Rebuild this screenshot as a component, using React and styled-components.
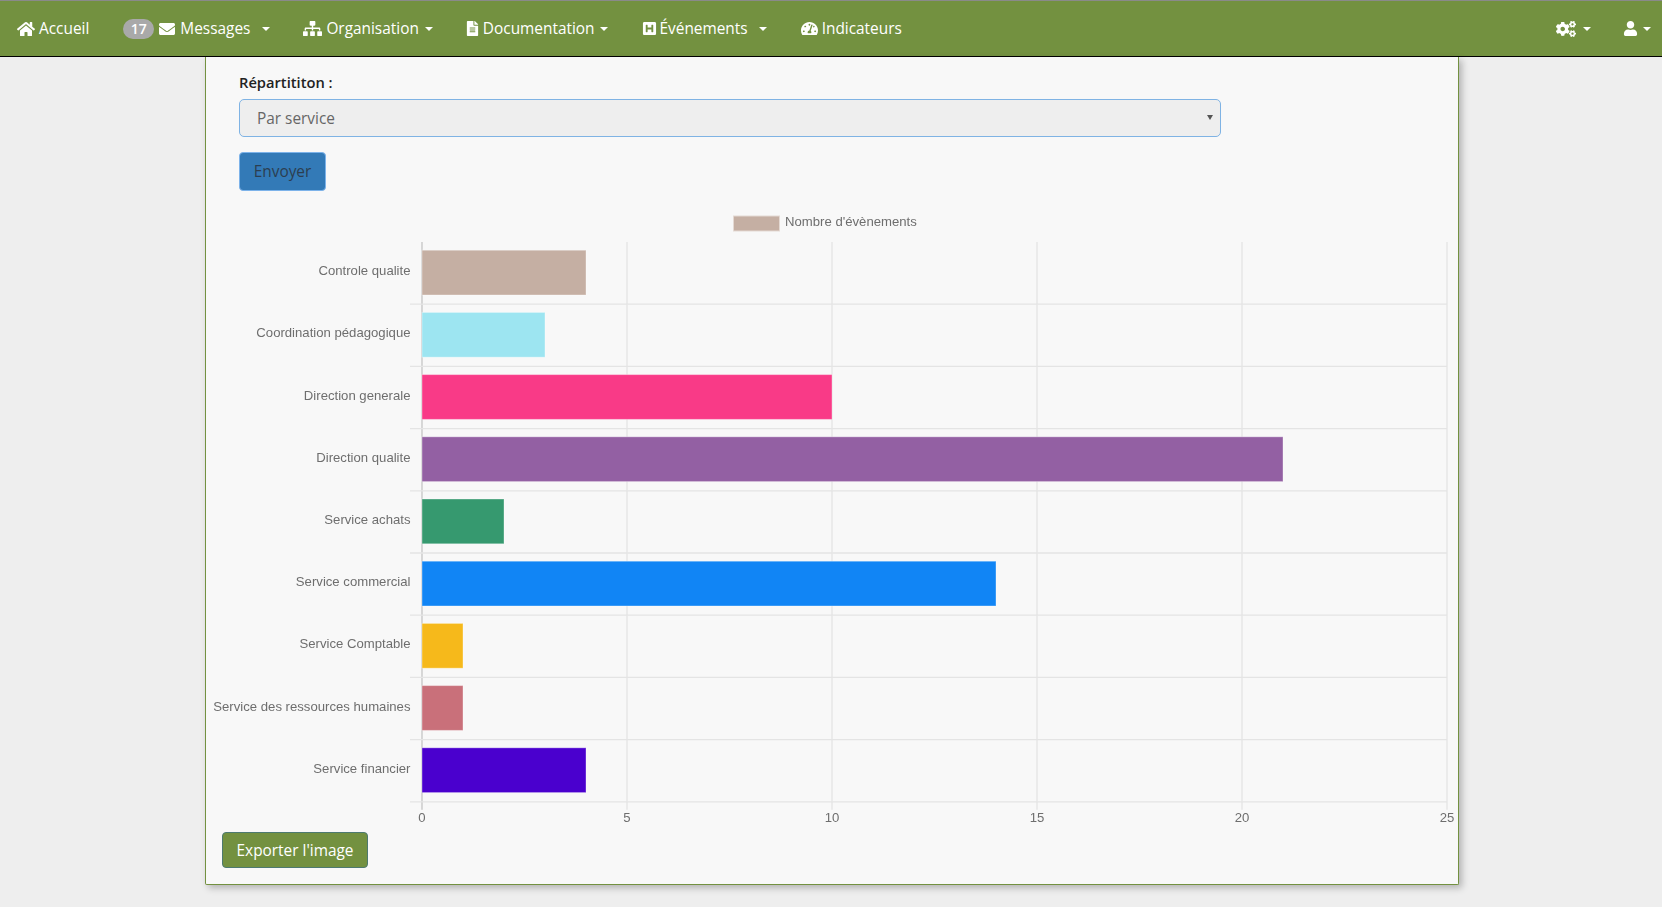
import React from 'react';
import styled, { createGlobalStyle } from 'styled-components';
import {
	FaHome,
	FaEnvelope,
	FaSitemap,
	FaFileAlt,
	FaHSquare,
	FaTachometerAlt,
	FaCogs,
	FaUser,
} from 'react-icons/fa';

const services = [
	{ label: 'Controle qualite', value: 4, color: '#c5afa3' },
	{ label: 'Coordination pédagogique', value: 3, color: '#9de5f1' },
	{ label: 'Direction generale', value: 10, color: '#f93a87' },
	{ label: 'Direction qualite', value: 21, color: '#9360a3' },
	{ label: 'Service achats', value: 2, color: '#36996f' },
	{ label: 'Service commercial', value: 14, color: '#1185f5' },
	{ label: 'Service Comptable', value: 1, color: '#f6b91b' },
	{ label: 'Service des ressources humaines', value: 1, color: '#c9707a' },
	{ label: 'Service financier', value: 4, color: '#4a00ce' },
];

// chart geometry, in svg units
const X0 = 216;
const UNIT = 41;
const TOP = 37;
const ROW = 62.2;
const RIGHT = X0 + 25 * UNIT;
const BOTTOM = TOP + 9 * ROW;

function Chart() {
	return (
		<ChartSvg width='1252' height='626' viewBox='0 0 1252 626'>
			<rect x='527.5' y='11' width='46' height='15' fill='#c5afa3' stroke='#e4d9d3' />
			<ChartText x='579' y='21.2'>
				Nombre d'évènements
			</ChartText>

			{[0, 5, 10, 15, 20, 25].map((tick) => (
				<g key={tick}>
					<line
						x1={X0 + tick * UNIT}
						x2={X0 + tick * UNIT}
						y1={TOP}
						y2={BOTTOM + 8}
						stroke={tick === 0 ? '#c4c4c4' : '#e4e4e4'}
						strokeWidth='1.3'
					/>
					<ChartText x={X0 + tick * UNIT} y={617} textAnchor='middle'>
						{tick}
					</ChartText>
				</g>
			))}

			{services.map((s, i) => (
				<g key={s.label}>
					<line
						x1={X0 - 12}
						x2={RIGHT}
						y1={TOP + (i + 1) * ROW}
						y2={TOP + (i + 1) * ROW}
						stroke='#e4e4e4'
						strokeWidth='1.3'
					/>
					<rect
						x={X0}
						y={TOP + i * ROW + 8.2}
						width={s.value * UNIT}
						height={44.8}
						fill={s.color}
						stroke='rgba(255,255,255,.35)'
					/>
					<ChartText x={X0 - 11.5} y={TOP + i * ROW + 33.1} textAnchor='end'>
						{s.label}
					</ChartText>
				</g>
			))}
		</ChartSvg>
	);
}

function App() {
	return (
		<>
			<GlobalStyle />
			<Navbar>
				<NavGroup>
					<NavItem>
						<FaHome size={18} />
						Accueil
					</NavItem>
					<NavItem $gap={5} $space={33}>
						<Badge>17</Badge>
						<FaEnvelope size={16} />
						Messages
						<Caret $gap={7} />
					</NavItem>
					<NavItem $space={32}>
						<FaSitemap size={19} />
						Organisation
						<Caret $gap={2} />
					</NavItem>
					<NavItem $gap={3}>
						<FaFileAlt size={15} />
						Documentation
						<Caret $gap={2} />
					</NavItem>
					<NavItem $gap={3}>
						<FaHSquare size={15} />
						Événements
						<Caret $gap={8} />
					</NavItem>
					<NavItem $space={0}>
						<FaTachometerAlt size={17} />
						Indicateurs
					</NavItem>
				</NavGroup>
				<UserGroup>
					<NavItem $space={0}>
						<FaCogs size={20} />
						<Caret $gap={3} />
					</NavItem>
					<NavItem $space={0} $gap={3}>
						<FaUser size={15} />
						<Caret $gap={2} />
					</NavItem>
				</UserGroup>
			</Navbar>
			<Page>
				<Panel>
					<FilterForm>
						<FieldLabel>Répartititon :</FieldLabel>
						<SelectWrap>
							<ServiceSelect defaultValue='service'>
								<option value='service'>Par service</option>
							</ServiceSelect>
						</SelectWrap>
						<SubmitButton type='button'>Envoyer</SubmitButton>
					</FilterForm>
					<Chart />
					<ExportButton type='button'>Exporter l'image</ExportButton>
				</Panel>
			</Page>
		</>
	);
}

const GlobalStyle = createGlobalStyle`
	html, body {
		margin: 0;
		padding: 0;
		background: #eeeeee;
		font-family: 'Open Sans', sans-serif;
	}
`;

const Navbar = styled.nav`
	height: 55px;
	display: flex;
	justify-content: space-between;
	align-items: center;
	padding: 0 11px 0 17px;
	background: #739140;
	border-top: 1px solid #8a8a8a;
	border-bottom: 1px solid #000;
`;

const NavGroup = styled.div`
	display: flex;
	align-items: center;
`;

const UserGroup = styled.div`
	display: flex;
	align-items: center;
	gap: 32px;
`;

const NavItem = styled.a`
	display: flex;
	align-items: center;
	gap: ${(p) => p.$gap ?? 4}px;
	margin-right: ${(p) => p.$space ?? 34}px;
	color: #fff;
	font-size: 15.4px;
	white-space: nowrap;
`;

const Badge = styled.span`
	width: 31px;
	height: 20px;
	border-radius: 10px;
	background: #a9a9a9;
	color: #fff;
	font-size: 14px;
	font-weight: 600;
	line-height: 20px;
	text-align: center;
`;

const Caret = styled.span`
	width: 0;
	height: 0;
	margin-left: ${(p) => p.$gap}px;
	border-top: 4px solid #fff;
	border-left: 4px solid transparent;
	border-right: 4px solid transparent;
`;

const Page = styled.main`
	height: 850px;
	display: flex;
	justify-content: center;
	padding-left: 2px;
`;

const Panel = styled.section`
	width: 1254px;
	height: 828px;
	box-sizing: border-box;
	background: #f8f8f8;
	border: 1px solid #739140;
	border-top: 0;
	border-radius: 0 0 2px 2px;
	box-shadow: 3px 3px 7px rgba(0, 0, 0, 0.25);
`;

const FilterForm = styled.form`
	display: flex;
	flex-direction: column;
	align-items: flex-start;
	padding: 14px 0 0 33px;
`;

const FieldLabel = styled.label`
	color: #222;
	font-size: 14.7px;
	font-weight: 600;
	line-height: 22px;
	margin-bottom: 6px;
`;

const SelectWrap = styled.div`
	position: relative;
	line-height: 0;

	&::after {
		content: '';
		position: absolute;
		top: 16px;
		right: 8px;
		border-top: 5px solid #555;
		border-left: 3px solid transparent;
		border-right: 3px solid transparent;
	}
`;

const ServiceSelect = styled.select`
	appearance: none;
	width: 982px;
	height: 38px;
	padding: 0 17px;
	color: #666;
	background-color: #eeeeee;
	border: 1px solid #7fb3e4;
	border-radius: 5px;
	font-family: 'Open Sans', sans-serif;
	font-size: 15.4px;
`;

const SubmitButton = styled.button`
	width: 87px;
	height: 39px;
	margin-top: 15px;
	padding: 0;
	color: #2c3e50;
	background: #337ab7;
	border: 1px solid #7db3ea;
	border-radius: 4px;
	font-family: 'Open Sans', sans-serif;
	font-size: 15.4px;
`;

const ChartSvg = styled.svg`
	display: block;
	margin-top: 14px;
	filter: blur(0.45px);
`;

const ChartText = styled.text`
	fill: #6e6e6e;
	font-family: 'Liberation Sans', Arial, sans-serif;
	font-size: 13.15px;
`;

const ExportButton = styled.button`
	display: block;
	width: 146px;
	height: 36px;
	margin: 1px 0 0 16px;
	padding: 0;
	color: #fff;
	background: #739140;
	border: 1px solid #4d7a70;
	border-radius: 4px;
	font-family: 'Open Sans', sans-serif;
	font-size: 15.4px;
`;

export default App;
